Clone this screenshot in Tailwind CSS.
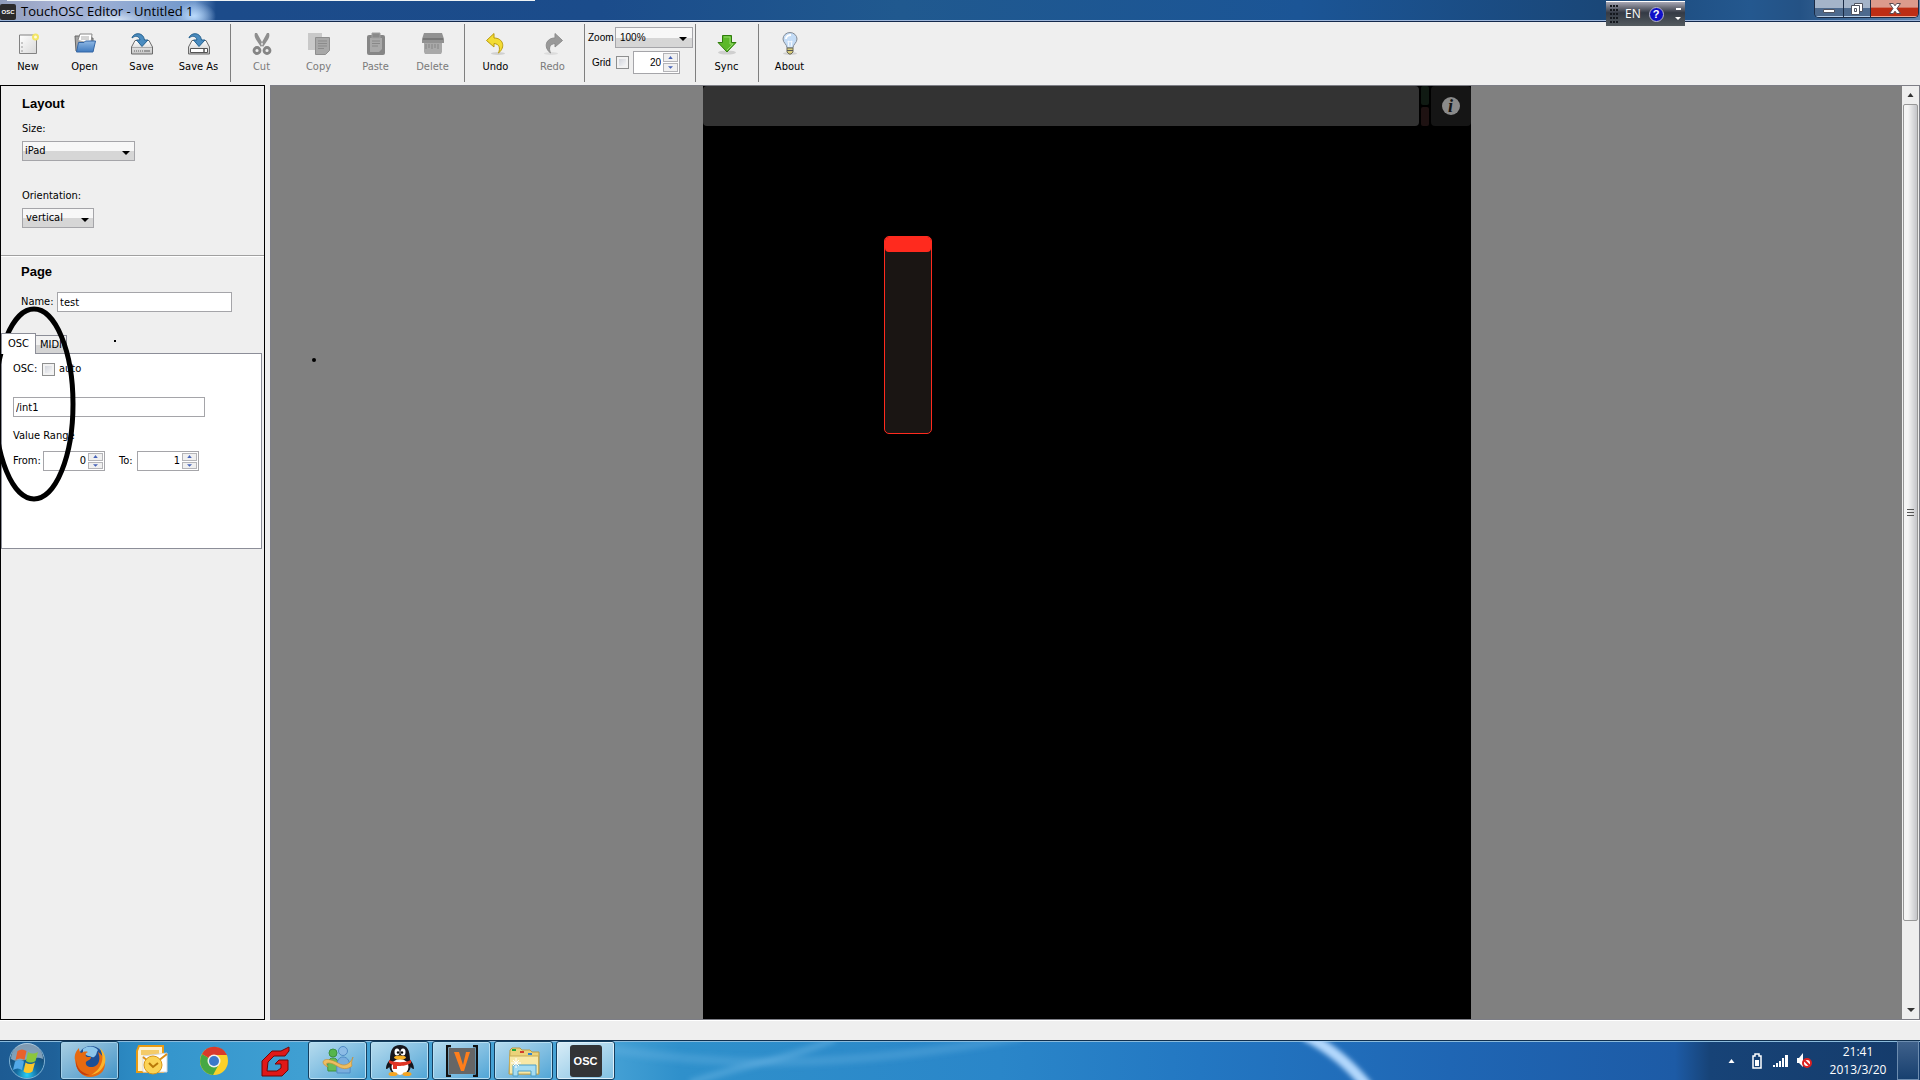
<!DOCTYPE html>
<html lang="en">
<head>
<meta charset="utf-8">
<title>TouchOSC Editor - Untitled 1</title>
<script src="https://cdn.jsdelivr.net/npm/@tailwindcss/browser@4"></script>
</head>
<body class="relative flex h-screen flex-col overflow-hidden bg-[#efefef] font-['DejaVu_Sans_Condensed',sans-serif] text-[11px] leading-4 text-black">

<!-- shared gradients and glyphs -->
<svg class="absolute size-0" aria-hidden="true">
  <defs>
    <linearGradient id="blue" x1="0" y1="0" x2="0" y2="1"><stop offset="0" stop-color="#8fb8e4"/><stop offset="1" stop-color="#3f7abf"/></linearGradient>
    <linearGradient id="drive" x1="0" y1="0" x2="0" y2="1"><stop offset="0" stop-color="#fff"/><stop offset="1" stop-color="#c4c4c4"/></linearGradient>
    <linearGradient id="paper" x1="0" y1="0" x2="1" y2="1"><stop offset="0" stop-color="#fff"/><stop offset="1" stop-color="#d8d8d8"/></linearGradient>
    <symbol id="arrow-up" viewBox="0 0 6 4"><path d="M0 4 3 0l3 4z"/></symbol>
    <symbol id="arrow-down" viewBox="0 0 8 4"><path d="M0 0h8L4 4z"/></symbol>
  </defs>
</svg>

<!-- title bar -->
<header class="flex h-[22px] shrink-0 items-start border-b border-[#14294c] bg-[radial-gradient(ellipse_22px_14px_at_194px_16px,#b9d9fb,transparent),radial-gradient(ellipse_34px_10px_at_115px_20px,#d5e4f5,transparent),linear-gradient(90deg,#8f9cb9_0,#a9b4d6_60px,#8fa9d2_130px,#6f97cb_195px,#1c4b8a_216px,#1b4c8b_600px,#20598f_900px,#1b5596_1300px,#1a4778_1600px,#24588f_1750px,#245285_1800px,#5f86b0_1920px)] shadow-[inset_0_-1px_0_#9db6da]">
  <div class="flex flex-1 items-center">
    <span class="mt-[3px] flex h-4 w-4 items-center justify-center rounded-xs bg-[#2b2b2b] font-['Liberation_Sans',sans-serif] text-[6px] font-bold text-white">OSC</span>
    <h1 class="pl-[5px] pt-[2px] font-['Open_Sans',sans-serif] text-[13px] leading-[18px]">TouchOSC Editor - Untitled 1</h1>
  </div>
  <div class="relative z-10 mt-px flex h-[25px] w-[79px] shrink-0 items-center bg-linear-to-b from-[#aaa9b6] via-[#343a45] via-45% to-[#555c60] border-t border-white pl-1">
    <svg class="h-[18px] w-2" viewBox="0 0 8 18" fill="#14181e"><path d="M0 0h2v2H0zM3 0h2v2H3zM6 0h2v2H6zM0 4h2v2H0zM3 4h2v2H3zM6 4h2v2H6zM0 8h2v2H0zM3 8h2v2H3zM6 8h2v2H6zM0 12h2v2H0zM3 12h2v2H3zM6 12h2v2H6zM0 16h2v2H0zM3 16h2v2H3zM6 16h2v2H6z"/></svg>
    <button class="pl-[7px] text-[12px] text-white font-['Open_Sans',sans-serif]">EN</button>
    <button class="ml-2 flex size-[15px] items-center justify-center rounded-full border border-[#b9b9c8] bg-[#1010c8] font-['Liberation_Sans',sans-serif] text-[11px] font-bold leading-none text-white" aria-label="Help">?</button>
    <button class="ml-[11px]" aria-label="Options"><svg class="h-3 w-[6px]" viewBox="0 0 6 12" fill="#fff"><path d="M1 0h5v2H1zM0 9h6L3 12z"/></svg></button>
  </div>
  <div class="ml-[129px] mr-px flex h-[18px] w-[105px] shrink-0 overflow-hidden rounded-b-[5px] border border-t-0 border-[#1b2b45]">
    <button class="flex w-[29px] items-center justify-center border-r border-[#1b2b45] bg-linear-to-b from-[#a4b4c9] from-45% to-[#4d6a8e] to-50% shadow-[inset_0_-1px_0_#b4cbe5]" aria-label="Minimize"><svg class="mt-1 h-1 w-3" viewBox="0 0 12 4"><path d="M.5.5h11v3H.5z" fill="#fff" stroke="#4f5360"/></svg></button>
    <button class="flex w-[27px] items-center justify-center border-r border-[#1b2b45] bg-linear-to-b from-[#a4b4c9] from-45% to-[#4d6a8e] to-50% shadow-[inset_0_-1px_0_#b4cbe5]" aria-label="Restore"><svg class="size-3" viewBox="0 0 12 12" stroke="#4f5360" fill="#fff"><path d="M3.500.5h8v8h-8z"/><path d="M.5 2.500h8v9h-8zM3.500 5.500h2v3h-2z" fill-rule="evenodd"/></svg></button>
    <button class="flex flex-1 items-center justify-center bg-linear-to-b from-[#dc9a8c] from-40% to-[#bd2d14] to-50% shadow-[inset_0_-1px_0_#f0a48f]" aria-label="Close"><svg class="h-[11px] w-3" viewBox="0 0 12 11"><path d="M.5.5h3.800L6 2.800 7.700.5h3.800L8 5.500l3.500 5H7.700L6 8.200l-1.700 2.300H.5l3.500-5z" fill="#fff" stroke="#5a4a50"/></svg></button>
  </div>
</header>
<div class="absolute left-[7px] top-0 h-px w-[528px] bg-[#eef3f5]"></div>

<!-- toolbar -->
<nav class="flex h-[62px] shrink-0 items-stretch py-[2px]" aria-label="Toolbar">
  <div class="flex">
    <button class="flex w-14 flex-col items-center pt-2"><svg class="size-6" viewBox="0 0 24 24"><path d="M3.500 3h17v18.500h-17z" fill="url(#paper)" stroke="#828282"/><path d="M6 10v2M6 14v2M6 18v2" stroke="#999"/><circle cx="19.500" cy="5" r="3.500" fill="#f3e565"/><circle cx="19.500" cy="5" r="1.500" fill="#fffbd8"/></svg><span class="mt-[3px]">New</span></button>
    <button class="flex w-[57px] flex-col items-center pt-2"><svg class="size-6" viewBox="0 0 24 24"><path d="M2 4h6l1 2h11v13H3z" fill="#a5a5a5" stroke="#666"/><path d="m5 8 2-6h12l-1 9" fill="#fff" stroke="#888"/><path d="M8 5h8M8 7h8" stroke="#aaa"/><path d="M5.500 10.500H11l1.500-1.500h10l-2.500 11H3.500z" fill="url(#blue)" stroke="#3567a5"/></svg><span class="mt-[3px]">Open</span></button>
    <button class="flex w-[57px] flex-col items-center pt-2"><svg class="size-6" viewBox="0 0 24 24"><path d="M5 8.500h14l3.500 6.500v7H1.500v-7z" fill="url(#drive)" stroke="#6b6b6b"/><path d="M2 15.500h20" stroke="#aaa"/><path d="M4 18h1v2H4zM6 18h1v2H6zM8 18h1v2H8zM10 18h1v2h-1zM12 18h1v2h-1zM14 18h6v2h-6z" fill="#999"/><path d="M2 6C3 1 13-1 14.500 8H18l-6 6.500L6.500 8H10C9 3.500 5 3.500 2 6z" fill="#4a8cc0" stroke="#24618f"/></svg><span class="mt-[3px]">Save</span></button>
    <button class="flex w-[57px] flex-col items-center pt-2"><svg class="size-6" viewBox="0 0 24 24"><path d="M5 8.500h14l3.500 6.500v7H1.500v-7z" fill="url(#drive)" stroke="#6b6b6b"/><path d="M3.500 16.500h17v4h-17z" fill="#fff" stroke="#555"/><path d="M17 17v3" stroke="#000"/><path d="M2 6C3 1 13-1 14.500 8H18l-6 6.500L6.500 8H10C9 3.500 5 3.500 2 6z" fill="#4a8cc0" stroke="#24618f"/></svg><span class="mt-[3px]">Save As</span></button>
  </div>
  <div class="ml-[3px] mr-[2px] w-px bg-[#7f7f7f]"></div>
  <div class="flex text-[#7a7a7a]">
    <button class="flex w-[57px] flex-col items-center pt-2"><svg class="size-6" viewBox="0 0 24 24" fill="#8e8e8e"><path d="M5 1c-1 3 0 5 2 8l4 6 2-3L7 1zM19 1c1 3 0 5-2 8l-4 6-2-3 6-11z"/><g fill="none" stroke="#858585" stroke-width="2.800"><circle cx="7" cy="18.500" r="3"/><circle cx="17" cy="18.500" r="3"/></g></svg><span class="mt-[3px]">Cut</span></button>
    <button class="flex w-[57px] flex-col items-center pt-2"><svg class="size-6" viewBox="0 0 24 24"><path d="M1 1h14v17H1z" fill="#c9c9c9"/><path d="M8.500 5.500h14v13l-4 4h-10z" fill="#a8a8a8" stroke="#8e8e8e"/><path d="M11 9h9M11 11.500h9M11 14h9M11 16.500h6" stroke="#8b8b8b"/></svg><span class="mt-[3px]">Copy</span></button>
    <button class="flex w-[57px] flex-col items-center pt-2"><svg class="size-6" viewBox="0 0 24 24"><rect x="3" y="3" width="18" height="20" rx="2" fill="#868686"/><path d="M6 6h12v11l-3 3H6z" fill="#a9a9a9"/><path d="M8 1h8v5H8z" fill="#8a8a8a" stroke="#a0a0a0"/><path d="M8 9h8M8 11.500h8M8 14h6" stroke="#888"/></svg><span class="mt-[3px]">Paste</span></button>
    <button class="flex w-[57px] flex-col items-center pt-2"><svg class="size-6" viewBox="0 0 24 24"><path d="M3 1h18l2 6v4H1V7z" fill="#929292"/><path d="M2 7h20" stroke="#777" stroke-width="2"/><path d="M3 11h18v9l-1 2H4l-1-2z" fill="#a9a9a9"/><path d="M5 12v5M8 12v4M11 12v5M14 12v4M17 12v5" stroke="#858585"/></svg><span class="mt-[3px]">Delete</span></button>
  </div>
  <div class="ml-[3px] mr-[2px] w-px bg-[#7f7f7f]"></div>
  <div class="flex">
    <button class="flex w-[57px] flex-col items-center pt-2"><svg class="size-6" viewBox="0 0 24 24"><ellipse cx="14" cy="21.500" rx="7" ry="1.500" fill="#d0d0d0"/><path d="M2.500 8.500 10 1.500V6c9 0 12 9 4.500 15 2-5 1-9-4.500-9.500V15z" fill="#f3dc34" stroke="#b99a0c"/></svg><span class="mt-[3px]">Undo</span></button>
    <button class="flex w-[57px] flex-col items-center pt-2 text-[#7a7a7a]"><svg class="size-6" viewBox="0 0 24 24"><ellipse cx="10" cy="21.500" rx="7" ry="1.500" fill="#dcdcdc"/><path d="M21.500 8.500 14 1.500V6C5 6 2 15 9.500 21c-2-5-1-9 4.500-9.500V15z" fill="#999" stroke="#8c8c8c"/></svg><span class="mt-[3px]">Redo</span></button>
  </div>
  <div class="mx-[3px] w-px bg-[#7f7f7f]"></div>
  <div class="flex w-[106px] flex-col font-['Liberation_Sans',sans-serif] text-[10px]">
    <div class="mt-[3px] flex h-[21px] items-center">
      <label class="w-[27px]" for="zoom">Zoom</label>
      <div class="relative w-[78px]"><select id="zoom" class="block h-[21px] w-full appearance-none border border-[#a5a5a9] bg-linear-to-b from-[#f7f7f7] from-50% to-[#d6d6d6] to-51% px-1 text-[10px]"><option>100%</option></select><svg class="pointer-events-none absolute right-[6px] top-[10px] h-1 w-2"><use href="#arrow-down"/></svg></div>
    </div>
    <div class="mt-[3px] flex h-[23px] items-center pl-1">
      <label class="w-6" for="grid">Grid</label>
      <input id="grid" type="checkbox" class="size-[13px] appearance-none border border-[#8e8f8f] bg-linear-to-br from-[#c9ccd4] to-white shadow-[inset_0_0_0_2px_#f2f2f2]">
      <div class="ml-1 flex h-[23px] w-[47px] border border-[#a5a5a9] bg-white p-px">
        <input aria-label="Grid size" class="w-[26px] text-right text-[10px]" type="text" value="20">
        <div class="ml-auto flex w-[15px] flex-col gap-px">
          <button class="flex flex-1 items-center justify-center border border-[#b4b4b8] bg-[#f0f0f0] text-[#4763b8]" aria-label="Increase"><svg class="h-[3px] w-[5px] fill-current"><use href="#arrow-up"/></svg></button>
          <button class="flex flex-1 items-center justify-center border border-[#b4b4b8] bg-[#f0f0f0] text-[#4763b8]" aria-label="Decrease"><svg class="h-[3px] w-[5px] fill-current"><use href="#arrow-down"/></svg></button>
        </div>
      </div>
    </div>
  </div>
  <div class="ml-px mr-[2px] w-px bg-[#7f7f7f]"></div>
  <button class="flex w-[57px] flex-col items-center pt-2"><svg class="size-6" viewBox="0 0 24 24"><ellipse cx="12" cy="20.500" rx="9" ry="2" fill="#cfcfcf"/><path d="M7.500 3.500h9v7H21l-9 9.500-9-9.500h4.500z" fill="#5cb82a" stroke="#2f7d0c"/><path d="M9 5h6v7h3l-6 6" fill="none" stroke="#93d96a"/></svg><span class="mt-[3px]">Sync</span></button>
  <div class="ml-[3px] mr-[2px] w-px bg-[#7f7f7f]"></div>
  <button class="flex w-[57px] flex-col items-center pt-2"><svg class="size-6" viewBox="0 0 24 24"><ellipse cx="12" cy="21.500" rx="7" ry="1.500" fill="#d0d0d0"/><path d="M9 16c0-4-4-5-4-9a7 6.500 0 0 1 14 0c0 4-4 5-4 9z" fill="#c4dcf6" stroke="#858c96"/><path d="M8 7c0-3 3-4 5-4" fill="none" stroke="#fff" stroke-width="2"/><path d="m10 9 1 6M14 9l-1 6M10 9l2 1 2-1" fill="none" stroke="#f8fbff"/><path d="M9 16h6v4l-2 2h-2l-2-2z" fill="#d9cd7c" stroke="#6c6a58"/><path d="M9 18.500h6" stroke="#555"/></svg><span class="mt-[3px]">About</span></button>
</nav>

<!-- work area -->
<main class="flex min-h-0 flex-1">
  <aside class="mr-[5px] mt-px flex w-[265px] shrink-0 flex-col border border-black">
    <section class="flex h-[170px] shrink-0 flex-col items-start border-b border-[#a0a0a0] pl-[21px] pt-[10px]">
      <h2 class="font-['Liberation_Sans',sans-serif] text-[13px] font-bold">Layout</h2>
      <label class="mt-[9px]" for="size">Size:</label>
      <div class="relative mt-[4px]"><select id="size" class="block h-5 w-[113px] appearance-none border border-[#a5a5a9] bg-linear-to-b from-[#f7f7f7] from-50% to-[#d6d6d6] to-51% px-[2px]"><option>iPad</option></select><svg class="pointer-events-none absolute right-[5px] top-[10px] h-1 w-2"><use href="#arrow-down"/></svg></div>
      <label class="mt-[27px]" for="orientation">Orientation:</label>
      <div class="relative mt-[4px]"><select id="orientation" class="block h-5 w-[72px] appearance-none border border-[#a5a5a9] bg-linear-to-b from-[#f7f7f7] from-50% to-[#d6d6d6] to-51% px-[3px]"><option>vertical</option></select><svg class="pointer-events-none absolute right-[5px] top-[10px] h-1 w-2"><use href="#arrow-down"/></svg></div>
    </section>
    <section class="flex h-[77px] shrink-0 flex-col border-t border-white pl-[20px] pt-[7px]">
      <h2 class="font-['Liberation_Sans',sans-serif] text-[13px] font-bold">Page</h2>
      <div class="mt-[12px] flex items-center">
        <label class="w-[36px] whitespace-nowrap" for="name">Name:</label>
        <input id="name" type="text" value="test" class="h-5 w-[175px] border border-[#a5a5a9] bg-white px-[2px]">
      </div>
    </section>
    <div class="flex h-5 shrink-0 items-end" role="tablist">
      <button role="tab" aria-selected="true" class="z-10 -mb-px h-[21px] w-[35px] border border-b-0 border-[#8c8e98] bg-white text-center">OSC</button>
      <button role="tab" aria-selected="false" class="h-[18px] w-[31px] border border-b-0 border-l-0 border-[#8c8e98] bg-linear-to-b from-[#f2f2f2] from-50% to-[#d4d4d4] to-51% text-center">MIDI</button>
    </div>
    <section class="mr-[2px] flex h-[196px] shrink-0 flex-col border border-[#8c8e98] bg-white pl-[11px] pt-[7px]">
      <div class="flex items-center">
        <span class="w-[29px] whitespace-nowrap">OSC:</span>
        <input id="auto" type="checkbox" class="size-[13px] appearance-none border border-[#8e8f8f] bg-linear-to-br from-[#c9ccd4] to-white shadow-[inset_0_0_0_2px_#f2f2f2]">
        <label class="pl-1" for="auto">auto</label>
      </div>
      <input aria-label="OSC address" type="text" value="/int1" class="mt-[20px] h-5 w-[192px] shrink-0 border border-[#a5a5a9] bg-white px-[2px]">
      <span class="mt-[11px]">Value Range</span>
      <div class="mt-[7px] flex items-center">
        <label class="w-[30px] whitespace-nowrap" for="from">From:</label>
        <div class="flex h-5 w-[62px] border border-[#a5a5a9] bg-white p-px">
          <input id="from" class="w-[41px] text-right" type="text" value="0">
          <div class="ml-auto flex w-[15px] flex-col gap-px">
            <button class="flex flex-1 items-center justify-center border border-[#b4b4b8] bg-[#f0f0f0] text-[#4763b8]" aria-label="Increase"><svg class="h-[3px] w-[5px] fill-current"><use href="#arrow-up"/></svg></button>
            <button class="flex flex-1 items-center justify-center border border-[#b4b4b8] bg-[#f0f0f0] text-[#4763b8]" aria-label="Decrease"><svg class="h-[3px] w-[5px] fill-current"><use href="#arrow-down"/></svg></button>
          </div>
        </div>
        <label class="ml-[14px] w-[18px]" for="to">To:</label>
        <div class="flex h-5 w-[62px] border border-[#a5a5a9] bg-white p-px">
          <input id="to" class="w-[41px] text-right" type="text" value="1">
          <div class="ml-auto flex w-[15px] flex-col gap-px">
            <button class="flex flex-1 items-center justify-center border border-[#b4b4b8] bg-[#f0f0f0] text-[#4763b8]" aria-label="Increase"><svg class="h-[3px] w-[5px] fill-current"><use href="#arrow-up"/></svg></button>
            <button class="flex flex-1 items-center justify-center border border-[#b4b4b8] bg-[#f0f0f0] text-[#4763b8]" aria-label="Decrease"><svg class="h-[3px] w-[5px] fill-current"><use href="#arrow-down"/></svg></button>
          </div>
        </div>
      </div>
    </section>
  </aside>

  <div class="mt-px flex min-w-0 flex-1 border border-[#7d7e86] bg-[#808080]">
    <div class="flex min-w-0 flex-1 justify-center">
      <!-- device layout -->
      <div class="relative w-[768px] bg-black">
        <div class="flex h-10 gap-[2px]">
          <div class="flex-1 rounded-[4px] bg-[#333]"></div>
          <div class="flex w-2 flex-col gap-[2px]"><div class="flex-1 rounded-[2px] bg-[#101a13]"></div><div class="flex-1 rounded-[2px] bg-[#1e1212]"></div></div>
          <div class="flex w-10 items-center justify-center rounded-[4px] bg-[#151515]"><span class="flex size-[18px] items-center justify-center rounded-full bg-[#8a8a8a] font-['Liberation_Serif',serif] text-[18px] font-bold italic leading-none text-[#151515]">i</span></div>
        </div>
        <div class="absolute left-[181px] top-[150px] h-[198px] w-12 overflow-hidden rounded-[5px] border border-[#ff2a1e] bg-[#1a1513]"><div class="h-[15px] rounded-b-[4px] bg-[#ff2a1e]"></div></div>
      </div>
    </div>
    <!-- vertical scroll bar -->
    <div class="flex w-[17px] shrink-0 flex-col bg-[#eee] px-px">
      <button class="flex h-[18px] items-center justify-center" aria-label="Scroll up"><svg class="h-1 w-[7px] fill-[#333]"><use href="#arrow-up"/></svg></button>
      <div class="flex flex-[817] items-center justify-center rounded-[2px] border border-[#979797] bg-linear-to-r from-[#f5f5f5] from-30% to-[#c3c4c8]"><svg class="h-2 w-[7px]" viewBox="0 0 7 8"><path d="M0 .5h7M0 3.500h7M0 6.500h7" stroke="#555"/></svg></div>
      <div class="flex-[80]"></div>
      <button class="flex h-[18px] items-center justify-center" aria-label="Scroll down"><svg class="h-1 w-2 fill-[#333]"><use href="#arrow-down"/></svg></button>
    </div>
  </div>
</main>
<div class="h-5 shrink-0 border-t border-white bg-[#efefef]"></div>

<!-- taskbar -->
<footer class="relative flex h-10 shrink-0 items-stretch overflow-hidden border-t border-[#10304f] bg-[linear-gradient(90deg,#1d5b93_0,#1f6199_55px,#2a86bf_120px,#3596cd_170px,#3f9fd2_300px,#48a3d6_600px,#2f90cb_680px,#2a86c9_1000px,#2377c2_1200px,#1f66b4_1450px,#1d5ba6_1675px,#174377_1710px,#153c6c_1900px)] shadow-[inset_0_1px_0_#8bbbdc]">
  <svg class="absolute left-[600px] top-0 h-10 w-[800px]" viewBox="0 0 800 40" fill="none" aria-hidden="true">
    <defs><filter id="soft" x="-20%" y="-20%" width="140%" height="140%"><feGaussianBlur stdDeviation="2.500"/></filter></defs>
    <g filter="url(#soft)"><path d="M10 8C120 26 240 28 420-4" stroke="#6cb7e6" stroke-opacity=".3" stroke-width="9"/><path d="M90 42C140 24 190 18 235-2" stroke="#7cc0ea" stroke-opacity=".35" stroke-width="7"/>
    <path d="M705-6C732 8 750 24 768 46" stroke="#b3d8fd" stroke-width="11"/></g>
  </svg>
  <button class="relative flex w-[60px] items-center pl-2" aria-label="Start">
    <svg class="size-[38px]" viewBox="0 0 38 38"><defs><radialGradient id="orb" cx=".5" cy=".9" r=".9"><stop offset="0" stop-color="#28d0f6"/><stop offset=".35" stop-color="#14699f"/><stop offset="1" stop-color="#173a60"/></radialGradient></defs><circle cx="19" cy="19" r="17.500" fill="url(#orb)" stroke="#7fb2d4"/><path d="M3 17a16 16 0 0 1 32 0c-9-5-23 6-32 0z" fill="#c8d8e4" opacity=".6"/><path d="M9.500 9c3-2 6-2 9 0L16.500 18c-3-2-6-2-9 0z" fill="#e9622b"/><path d="M20 10c3 2 6 2 10 0l-2.500 9c-3 2-6 2-9.500 0z" fill="#8cc63c"/><path d="M7 19.500c3-2 6-2 9 0l-2 8.500c-3-2-6-2-9 0z" fill="#52a9e8"/><path d="M17.500 20.500c3 2 6 2 9.500 0l-2.500 9c-3 2-6 2-9 0z" fill="#fbc62b"/></svg>
  </button>
  <div class="relative flex gap-[3px]">
    <button class="flex w-[59px] items-center justify-center rounded-[3px] border border-[#143f60] bg-linear-to-br from-[#a9cfe3] to-[#3f93c6] shadow-[inset_0_0_0_1px_#a5d1ea]" aria-label="Firefox">
      <svg class="size-8" viewBox="0 0 32 32"><circle cx="17" cy="14" r="13" fill="#1d4f95"/><path d="M9 4c5-4 12-3 15 1-2 3-1 5-4 7-2 1-3-1-5-1s-3-2-6-2z" fill="#8cc6ea"/><path d="M1 15C0 10 2 6 5 3c0 3 1 4 2 5 2-1 4-2 7-1-3 1-3 4-1 5h4c0 3-3 3-5 5-1 3 2 5 5 5 4 0 7-2 8-6 1-3 0-6-1-9 6 4 7 9 7 12 0 8-7 13-15 13C8 32 2 25 1 15z" fill="#e66a10"/><path d="M26 3c6 6 7 13 3 19-3 5-7 7-12 8 7-4 10-9 11-14 1-4 0-8-2-13z" fill="#f9b52b"/><path d="M2 15c1 9 6 13 14 15C8 32 1 25 2 15z" fill="#c53d0c"/></svg>
    </button>
    <button class="flex w-[59px] items-center justify-center" aria-label="Outlook">
      <svg class="size-8" viewBox="0 0 32 32"><path d="M3 1h24v26H1V6z" fill="#fdf2d2" stroke="#e99c14" stroke-width="2"/><path d="M5 5h18v5H5z" fill="#f4cb68"/><path d="m7 11 24-3v19H7z" fill="#fff" stroke="#d7d7d7"/><path d="m7 12 10 8 14-11" fill="none" stroke="#dd8e15" stroke-width="2"/><circle cx="17" cy="20" r="9" fill="#fbd354" stroke="#d89515"/><path d="m13 18 4 4 5-4" fill="none" stroke="#b87908" stroke-width="2"/></svg>
    </button>
    <button class="flex w-[59px] items-center justify-center" aria-label="Chrome">
      <svg class="size-[30px]" viewBox="0 0 30 30"><circle cx="15" cy="15" r="14" fill="#fbd129"/><path d="M3 8a14 14 0 0 0 11 21l6-11-5-3z" fill="#46a843"/><path d="M15 15 3 8a14 14 0 0 1 25 1H15z" fill="#d93a2b"/><circle cx="15" cy="15" r="6.500" fill="#f2f2ee"/><circle cx="15" cy="15" r="5" fill="#3b78c9"/></svg>
    </button>
    <button class="flex w-[59px] items-center justify-center" aria-label="G client">
      <svg class="size-8" viewBox="0 0 32 32"><path d="M29 2v4l-4 5H14l-6 6-1 9h10l4-3v-4h-6l4-4h9v10l-6 6H2V16L12 6h9z" fill="#e01818" stroke="#6d0909"/></svg>
    </button>
    <button class="flex w-[59px] items-center justify-center rounded-[3px] border border-[#143f60] bg-linear-to-br from-[#b7dcee] to-[#4ea5d6] shadow-[inset_0_0_0_1px_#b8dff3]" aria-label="Messenger">
      <svg class="size-8" viewBox="0 0 32 32"><circle cx="11" cy="8" r="4" fill="#55b64b" stroke="#3d9140"/><path d="M6 26c-1-8 0-13 5-13s6 5 5 13z" fill="#67bd57" stroke="#3d9140"/><circle cx="21" cy="6" r="4.500" fill="#8cbce6" stroke="#4f8bc5"/><path d="M15 28c-1-11 1-16 6-16s8 5 7 16z" fill="#79aede" stroke="#4f8bc5"/><path d="M1 17c1-4 8-3 15 1 6 4 12 2 15-6-1 4-2 6-1 9-5 4-10 3-15 0-5-3-9-4-11-2l2 3c-3-1-5-3-5-5z" fill="#eebd62" stroke="#c58b2e" stroke-width=".6"/></svg>
    </button>
    <button class="flex w-[59px] items-center justify-center rounded-[3px] border border-[#143f60] bg-linear-to-br from-[#b7dcee] to-[#4ea5d6] shadow-[inset_0_0_0_1px_#b8dff3]" aria-label="QQ">
      <svg class="size-8" viewBox="0 0 32 32"><path d="M7 13C5 16 2 19 2 24c2 0 3-2 4-3M25 13c2 3 5 6 5 11-2 0-3-2-4-3" fill="#16161c"/><path d="M6 15C6 5 9 0 16 0s10 5 10 15l1 6c-1 6-5 9-11 9S6 27 5 21z" fill="#16161c"/><ellipse cx="16" cy="22" rx="8.500" ry="8" fill="#fff"/><ellipse cx="9" cy="29" rx="4.500" ry="2" fill="#f5a623"/><ellipse cx="23" cy="29" rx="4.500" ry="2" fill="#f5a623"/><ellipse cx="13" cy="7" rx="2.500" ry="3.500" fill="#fff"/><ellipse cx="19" cy="7" rx="2.500" ry="3.500" fill="#fff"/><circle cx="14" cy="7.500" r="1.200"/><circle cx="18" cy="7.500" r="1.200"/><ellipse cx="16" cy="12.500" rx="6" ry="2" fill="#f8b022"/><path d="M5 15c6 3 16 3 22 0v3c-5 3-10 3-14 3v3H9v-4l-4-2z" fill="#e03424"/></svg>
    </button>
    <button class="flex w-[59px] items-center justify-center rounded-[3px] border border-[#143f60] bg-linear-to-br from-[#b7dcee] to-[#4ea5d6] shadow-[inset_0_0_0_1px_#b8dff3]" aria-label="V">
      <svg class="size-8" viewBox="0 0 32 32"><path d="M3 3h26v26H3z" fill="#666"/><path d="M5 1H1v30h4M27 1h4v30h-4" fill="none" stroke="#111" stroke-width="2.500"/><path d="M8 7h5l4 13 3-13h4l-6 19h-3z" fill="#ff7e1b"/></svg>
    </button>
    <button class="flex w-[59px] items-center justify-center rounded-[3px] border border-[#143f60] bg-linear-to-br from-[#b7dcee] to-[#4ea5d6] shadow-[inset_0_0_0_1px_#b8dff3]" aria-label="Explorer">
      <svg class="size-8" viewBox="0 0 32 32"><path d="M2 5 4 3h8l2 2h8l2 2h7v22H1z" fill="#ebd27a" stroke="#b99a45"/><path d="M4 4h4v2H4z" fill="#1fa73a"/><path d="M12 6h4v2h-4z" fill="#d43c2c"/><path d="M20 8h4v2h-4z" fill="#2c83d4"/><path d="M1.500 11h29v18h-29z" fill="#f8e8a6" stroke="#c7ab57"/><path d="M5 31V20h23v11h-5v-5H10v5z" fill="#a5dcf3" stroke="#4a9ec8"/><path d="M8 13v10M3 18h10M5 15l6 6M11 15l-6 6" stroke="#fff"/></svg>
    </button>
    <button class="flex w-[59px] items-center justify-center rounded-[3px] border border-[#143f60] bg-linear-to-br from-[#d9edf7] to-[#7fc0e2] shadow-[inset_0_0_0_1px_#def0fa]" aria-label="TouchOSC Editor">
      <span class="flex size-8 items-center justify-center rounded-[3px] bg-[#333436] font-['Liberation_Sans',sans-serif] text-[11px] font-bold text-white">OSC</span>
    </button>
  </div>
  <div class="relative ml-auto flex items-center text-white">
    <button aria-label="Show hidden icons"><svg class="h-1 w-[7px] fill-white"><use href="#arrow-up"/></svg></button>
    <svg class="ml-[17px] h-4 w-[10px]" viewBox="0 0 10 16" role="img" aria-label="Battery"><path d="M3 1h4v2h2v12H1V3h2z" fill="none" stroke="#fff" stroke-width="1.500"/><path d="M3 7h4v6H3z" fill="#fff"/></svg>
    <svg class="ml-[11px] h-3 w-[15px]" viewBox="0 0 15 12" fill="#fff" role="img" aria-label="Signal"><path d="M0 10h2v2H0zM3 8h2v4H3zM6 6h2v6H6zM9 3h2v9H9zM12 0h3v12h-3z"/></svg>
    <svg class="ml-[9px] size-[15px]" viewBox="0 0 15 15" role="img" aria-label="Muted"><path d="M0 5h2l4-5v14L2 10H0z" fill="#fff"/><circle cx="10" cy="10" r="4" fill="#fff" stroke="#dc2020" stroke-width="2"/><path d="m7 7 6 6" stroke="#dc2020" stroke-width="2"/></svg>
    <div class="ml-2 flex w-[76px] flex-col items-center font-['Open_Sans',sans-serif] text-[12px] leading-[18px]"><time>21:41</time><time>2013/3/20</time></div>
    <button class="mx-px w-[22px] self-stretch border border-[#6d8db0] bg-linear-to-b from-[#3f618b] to-[#17406f]" aria-label="Show desktop"></button>
  </div>
</footer>

<!-- hand-drawn marks over the window -->
<svg class="pointer-events-none absolute left-0 top-[300px] h-[210px] w-[330px]" viewBox="0 0 330 210" aria-hidden="true">
  <ellipse cx="34" cy="104" rx="39" ry="95" fill="none" stroke="#000" stroke-width="5"/>
  <circle cx="314" cy="60" r="2"/><path d="M114 40h2v2h-2z"/>
</svg>
</body>
</html>
